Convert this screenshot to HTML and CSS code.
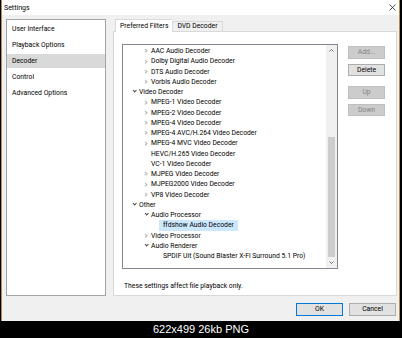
FILE: index.html
```html
<!DOCTYPE html>
<html lang="en">
<head>
    <meta charset="UTF-8">
    <meta name="viewport" content="width=device-width, initial-scale=1.0">
    <title>Settings</title>
    <link rel="stylesheet" href="styles.css">
</head>
<body>
    <div class="window">
        <div class="titlebar">
            <span class="title">Settings</span>
            <svg class="close" width="7" height="7" viewBox="0 0 7 7">
                <path d="M0.5 0.5 L6.5 6.5 M6.5 0.5 L0.5 6.5" stroke="#222" stroke-width="0.8" fill="none"/>
            </svg>
        </div>

        <div class="content">
            <ul class="nav">
                <li>User Interface</li>
                <li>Playback Options</li>
                <li class="selected">Decoder</li>
                <li>Control</li>
                <li>Advanced Options</li>
            </ul>

            <div class="pane">
                <div class="tabs">
                    <div class="tab active">Preferred Filters</div>
                    <div class="tab">DVD Decoder</div>
                </div>
                <div class="panel">
                    <div class="filters">
                        <div class="tree">
                            <div class="tree-items">
                                <div class="row l2"><span class="exp"></span>AAC Audio Decoder</div>
                                <div class="row l2"><span class="exp"></span>Dolby Digital Audio Decoder</div>
                                <div class="row l2"><span class="exp"></span>DTS Audio Decoder</div>
                                <div class="row l2"><span class="exp"></span>Vorbis Audio Decoder</div>
                                <div class="row l1"><span class="exp open"></span>Video Decoder</div>
                                <div class="row l2"><span class="exp"></span>MPEG-1 Video Decoder</div>
                                <div class="row l2"><span class="exp"></span>MPEG-2 Video Decoder</div>
                                <div class="row l2"><span class="exp"></span>MPEG-4 Video Decoder</div>
                                <div class="row l2"><span class="exp"></span>MPEG-4 AVC/H.264 Video Decoder</div>
                                <div class="row l2"><span class="exp"></span>MPEG-4 MVC Video Decoder</div>
                                <div class="row l2"><span class="exp none"></span>HEVC/H.265 Video Decoder</div>
                                <div class="row l2"><span class="exp none"></span>VC-1 Video Decoder</div>
                                <div class="row l2"><span class="exp"></span>MJPEG Video Decoder</div>
                                <div class="row l2"><span class="exp"></span>MJPEG2000 Video Decoder</div>
                                <div class="row l2"><span class="exp"></span>VP8 Video Decoder</div>
                                <div class="row l1"><span class="exp open"></span>Other</div>
                                <div class="row l2"><span class="exp open"></span>Audio Processor</div>
                                <div class="row l3"><span class="label selected">ffdshow Audio Decoder</span></div>
                                <div class="row l2"><span class="exp"></span>Video Processor</div>
                                <div class="row l2"><span class="exp open"></span>Audio Renderer</div>
                                <div class="row l3"><span class="label">SPDIF Uit (Sound Blaster X-Fi Surround 5.1 Pro)</span></div>
                            </div>
                            <div class="scrollbar">
                                <div class="sb-btn">
                                    <svg width="5" height="3" viewBox="0 0 5 3"><path d="M0.5 2.5 L2.5 0.5 L4.5 2.5" stroke="#606060" stroke-width="0.9" fill="none"/></svg>
                                </div>
                                <div class="sb-track"><div class="sb-thumb"></div></div>
                                <div class="sb-btn">
                                    <svg width="5" height="3" viewBox="0 0 5 3"><path d="M0.5 0.5 L2.5 2.5 L4.5 0.5" stroke="#606060" stroke-width="0.9" fill="none"/></svg>
                                </div>
                            </div>
                        </div>

                        <div class="side">
                            <button disabled>Add...</button>
                            <button class="spaced">Delete</button>
                            <button disabled>Up</button>
                            <button disabled>Down</button>
                        </div>
                    </div>
                    <p class="note">These settings affect file playback only.</p>
                </div>
            </div>
        </div>

        <div class="dialog-buttons">
            <button class="default">OK</button>
            <button>Cancel</button>
        </div>
    </div>

    <div class="caption">622x499 26kb PNG</div>
</body>
</html>
```

FILE: styles.css
```css
/* General */
body {
    margin: 0;
    width: 402px;
    height: 338px;
    overflow: hidden;
    background: #000;
    font-family: Roboto, 'Liberation Sans', sans-serif;
    font-size: 6.8px;
    color: #000;
}

.window {
    margin-left: 1px;
    width: 399px;
    height: 321px;
    box-sizing: border-box;
    border-left: 1px solid #b58c52;
    border-right: 1px solid #b58c52;
    background: #f0f0f0;
    display: flex;
    flex-direction: column;
}

/* Title bar */
.titlebar {
    height: 15px;
    background: #fff;
    display: flex;
    align-items: center;
    justify-content: space-between;
    padding: 0 3px 0 2px;
}

.title {
    font-size: 7px;
}

/* Main area */
.content {
    display: flex;
    gap: 7px;
    height: 277px;
    padding: 4px 2px 0 4px;
}

.nav {
    list-style: none;
    margin: 0;
    padding: 2px 0 0;
    width: 100px;
    box-sizing: border-box;
    background: #fff;
    border: 1px solid #a3a3a3;
}

.nav li {
    height: 14px;
    line-height: 14px;
    margin-bottom: 2px;
    padding-left: 5px;
}

.nav .selected {
    background: #d9d9d9;
}

.pane {
    flex: 1;
    display: flex;
    flex-direction: column;
}

/* Tabs */
.tabs {
    display: flex;
    align-items: flex-end;
    height: 12px;
    padding-left: 2px;
}

.tab {
    box-sizing: border-box;
    height: 10px;
    line-height: 9px;
    padding: 0 4px;
    border: 1px solid #d9d9d9;
    border-bottom: none;
    background: #f0f0f0;
}

.tab.active {
    height: 13px;
    line-height: 12px;
    margin-bottom: -1px;
    border-right: none;
    background: #fff;
    position: relative;
    z-index: 1;
}

.panel {
    flex: 1;
    background: #fff;
    border: 1px solid #d9d9d9;
    padding: 12px 10px 0 8px;
    display: flex;
    flex-direction: column;
}

.filters {
    display: flex;
    gap: 10px;
}

/* Tree view */
.tree {
    width: 216px;
    height: 225px;
    box-sizing: border-box;
    border: 1px solid #828790;
    display: flex;
}

.tree-items {
    flex: 1;
    padding-top: 1px;
    overflow: hidden;
}

.row {
    height: 10.25px;
    display: flex;
    align-items: center;
    white-space: nowrap;
}

.l1 { padding-left: 8px; }
.l2 { padding-left: 20px; }
.l3 { padding-left: 36px; }

.exp {
    width: 8px;
    height: 100%;
    display: inline-flex;
    align-items: center;
    justify-content: center;
    flex-shrink: 0;
}

.exp::before {
    content: "";
    width: 2.4px;
    height: 2.4px;
    margin-left: -2px;
    border-right: 0.8px solid #b4b4b4;
    border-bottom: 0.8px solid #b4b4b4;
    transform: rotate(-45deg);
}

.exp.open::before {
    margin-left: -1px;
    margin-top: -2px;
    border-color: #4a4a4a;
    transform: rotate(45deg);
}

.exp.none::before {
    display: none;
}

.label {
    height: 100%;
    display: inline-flex;
    align-items: center;
    padding: 0 4px;
}

.label.selected {
    background: #cce8ff;
}

.scrollbar {
    width: 11px;
    background: #f0f0f0;
    display: flex;
    flex-direction: column;
}

.sb-btn {
    height: 11px;
    display: flex;
    align-items: center;
    justify-content: center;
}

.sb-track {
    flex: 1;
    display: flex;
    flex-direction: column;
    justify-content: flex-end;
    align-items: center;
}

.sb-thumb {
    width: 7px;
    height: 120px;
    background: #cdcdcd;
}

/* Buttons */
button {
    font-family: inherit;
    font-size: inherit;
    padding: 0;
    box-sizing: border-box;
    border: 1px solid #adadad;
    background: #e1e1e1;
    color: #000;
}

button:disabled {
    background: #cccccc;
    border-color: #bfbfbf;
    color: #838383;
}

.side {
    width: 37px;
    padding-top: 2px;
    display: flex;
    flex-direction: column;
}

.side button {
    height: 12.5px;
    margin-bottom: 5px;
}

.side .spaced {
    margin-bottom: 10px;
}

.note {
    margin: 12px 0 0 2px;
    line-height: 10px;
}

.dialog-buttons {
    display: flex;
    justify-content: flex-end;
    gap: 6px;
    padding: 7px 3px 0 0;
}

.dialog-buttons button {
    width: 47px;
    height: 12.5px;
}

.dialog-buttons .default {
    border-color: #0078d7;
}

/* Thumbnail caption */
.caption {
    height: 17px;
    line-height: 17px;
    text-align: center;
    color: #fff;
    font-family: 'Liberation Sans', Arial, sans-serif;
    font-size: 11px;
}
```
